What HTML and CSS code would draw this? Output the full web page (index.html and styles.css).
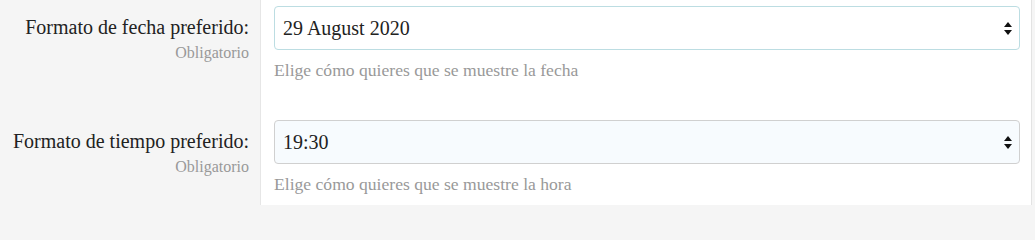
FILE: index.html
```html
<!DOCTYPE html>
<html lang="es">
<head>
<meta charset="utf-8">
<link rel="stylesheet" href="styles.css">
</head>
<body>
<div class="page">
  <div class="form">
    <div class="row">
      <div class="label-col">
        <div class="label">Formato de fecha preferido:</div>
        <div class="req">Obligatorio</div>
      </div>
      <div class="field-col">
        <div class="select focused">
          <span class="value">29 August 2020</span>
          <svg class="arrows" width="8" height="13" viewBox="0 0 8 13"><polygon points="4,0 8,5 0,5" fill="#111"/><polygon points="0,8 8,8 4,13" fill="#111"/></svg>
        </div>
        <div class="help">Elige cómo quieres que se muestre la fecha</div>
      </div>
    </div>
    <div class="row">
      <div class="label-col">
        <div class="label">Formato de tiempo preferido:</div>
        <div class="req">Obligatorio</div>
      </div>
      <div class="field-col">
        <div class="select tinted">
          <span class="value">19:30</span>
          <svg class="arrows" width="8" height="13" viewBox="0 0 8 13"><polygon points="4,0 8,5 0,5" fill="#111"/><polygon points="0,8 8,8 4,13" fill="#111"/></svg>
        </div>
        <div class="help">Elige cómo quieres que se muestre la hora</div>
      </div>
    </div>
  </div>
  <div class="edge"></div>
</div>
</body>
</html>
```
FILE: styles.css
```css
html, body {
  margin: 0;
  padding: 0;
}
body {
  font-family: "Liberation Serif", "Times New Roman", serif;
  color: #222;
  background: #f5f5f5;
}
.page {
  display: flex;
  height: 205px;
  overflow: hidden;
}
.form {
  flex: 1;
  display: flex;
  flex-direction: column;
  border-right: 1px solid #e3e3e3;
}
.row {
  display: flex;
  height: 114px;
  flex-shrink: 0;
}
.label-col {
  width: 261px;
  box-sizing: border-box;
  padding: 12px 11px 0 0;
  background: #f5f5f5;
  border-right: 1px solid #e6e6e6;
  text-align: right;
}
.label {
  font-size: 20px;
  line-height: 30px;
  color: #222;
}
.req {
  font-size: 16px;
  line-height: 22px;
  color: #999;
}
.field-col {
  flex: 1;
  background: #fff;
  padding: 6px 11px 0 13px;
}
.select {
  height: 44px;
  box-sizing: border-box;
  border: 1px solid #ccc;
  border-radius: 4px;
  display: flex;
  align-items: center;
  justify-content: space-between;
  padding: 0 7px 0 8px;
}
.select.focused {
  border-color: #bcdde2;
  background: #fff;
}
.select.tinted {
  border-color: #d0d0d0;
  background: #f7fbfe;
}
.value {
  font-size: 20px;
  color: #222;
}
.arrows {
  display: block;
  margin-top: 1px;
}
.help {
  margin-top: 8px;
  font-size: 17.6px;
  line-height: 24px;
  color: #999;
}
.edge {
  width: 3px;
  background: #f5f5f5;
}
```
